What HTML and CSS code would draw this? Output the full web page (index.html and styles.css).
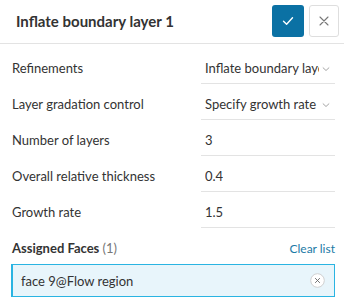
FILE: index.html
```html
<!DOCTYPE html>
<html>
<head>
<meta charset="utf-8">
<link rel="stylesheet" href="styles.css">
</head>
<body>
<div class="panel">
  <div class="header">
    <div class="title">Inflate boundary layer 1</div>
    <button class="btn btn-ok" aria-label="Save">
      <svg width="14" height="14" viewBox="0 0 14 14"><path d="M2.5 7.3 L5.6 10.2 L11.5 3.8" fill="none" stroke="#fff" stroke-width="1.4" stroke-linecap="round" stroke-linejoin="round"/></svg>
    </button>
    <button class="btn btn-close" aria-label="Close">
      <svg width="12" height="12" viewBox="0 0 12 12"><path d="M2 2 L10 10 M10 2 L2 10" fill="none" stroke="#777" stroke-width="1.1" stroke-linecap="round"/></svg>
    </button>
  </div>
  <div class="form">
    <div class="row">
      <div class="label">Refinements</div>
      <div class="field select">
        <span class="value">Inflate boundary layer</span>
        <svg class="chev" width="8" height="6" viewBox="0 0 8 6"><path d="M0.8 1.5 L4 4.5 L7.2 1.5" fill="none" stroke="#9a9a9a" stroke-width="0.9"/></svg>
      </div>
    </div>
    <div class="row">
      <div class="label">Layer gradation control</div>
      <div class="field select">
        <span class="value">Specify growth rate</span>
        <svg class="chev" width="8" height="6" viewBox="0 0 8 6"><path d="M0.8 1.5 L4 4.5 L7.2 1.5" fill="none" stroke="#9a9a9a" stroke-width="0.9"/></svg>
      </div>
    </div>
    <div class="row">
      <div class="label">Number of layers</div>
      <div class="field"><span class="value">3</span></div>
    </div>
    <div class="row">
      <div class="label">Overall relative thickness</div>
      <div class="field"><span class="value">0.4</span></div>
    </div>
    <div class="row">
      <div class="label">Growth rate</div>
      <div class="field"><span class="value">1.5</span></div>
    </div>
    <div class="assigned-head">
      <div class="assigned-title">Assigned Faces <span class="count">(1)</span></div>
      <a class="clear">Clear list</a>
    </div>
    <div class="face">
      <span class="face-name">face 9@Flow region</span>
      <span class="face-remove">
        <svg width="15" height="15" viewBox="0 0 15 15"><circle cx="7.5" cy="7.5" r="6.8" fill="#fff" stroke="#d0d0d0" stroke-width="1"/><path d="M5.4 5.4 L9.6 9.6 M9.6 5.4 L5.4 9.6" stroke="#666" stroke-width="0.9" stroke-linecap="round"/></svg>
      </span>
    </div>
  </div>
</div>
</body>
</html>
```
FILE: styles.css
```css
html, body {
  margin: 0;
  padding: 0;
  background: #fff;
}
body {
  font-family: Lato, "Open Sans", sans-serif;
  color: #333;
  width: 344px;
}
.header {
  display: flex;
  align-items: center;
  padding: 5px 5px 6px 16px;
  border-bottom: 1px solid #e3e3e3;
}
.title {
  flex: 1;
  font-size: 15px;
  font-weight: 700;
  color: #333;
}
.btn {
  height: 32px;
  border-radius: 3px;
  display: flex;
  align-items: center;
  justify-content: center;
  padding: 0;
  margin: 0;
  cursor: pointer;
}
.btn-ok {
  width: 32px;
  background: #0b71a4;
  border: none;
}
.btn-close {
  width: 30px;
  margin-left: 5px;
  background: #fff;
  border: 1px solid #dedede;
}
.form {
  padding: 4px 9px 0 12px;
}
.row {
  display: flex;
  height: 36px;
}
.label {
  width: 189px;
  font-size: 13px;
  line-height: 16px;
  padding-top: 12px;
}
.field {
  flex: 1;
  display: flex;
  align-items: flex-start;
  border-bottom: 1px solid #e3e3e3;
  padding: 12px 0 0 4px;
  font-size: 13px;
  line-height: 16px;
  min-width: 0;
}
.value {
  white-space: nowrap;
  overflow: hidden;
}
.select .value {
  flex: 1;
  min-width: 0;
}
.chev {
  flex: none;
  margin: 6px 5px 0 3px;
}
.assigned-head {
  display: flex;
  justify-content: space-between;
  align-items: center;
  margin-top: 12px;
  height: 16px;
}
.assigned-title {
  font-size: 13px;
  font-weight: 700;
  color: #333;
}
.count {
  font-weight: 400;
  color: #777;
}
.clear {
  font-size: 12px;
  color: #1c7aa6;
  cursor: pointer;
}
.face {
  margin: 8px 0 0 -1px;
  height: 31px;
  display: flex;
  align-items: center;
  background: #e8f5fb;
  border: 1px solid #2ab4e2;
  border-left-width: 2px;
  padding: 0 8px 0 8px;
  font-size: 13px;
}
.face-name {
  flex: 1;
}
.face-remove {
  display: flex;
  margin-right: 1px;
}
```
